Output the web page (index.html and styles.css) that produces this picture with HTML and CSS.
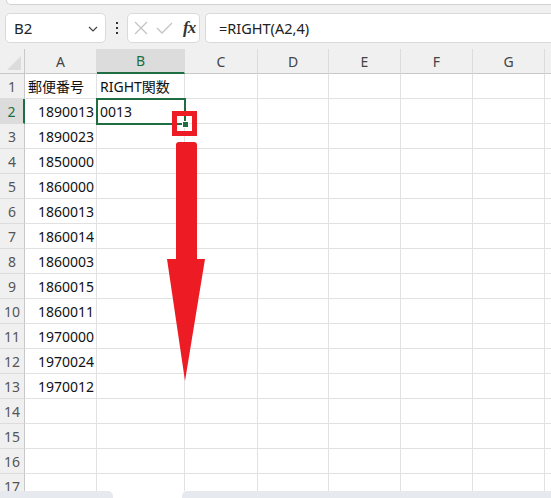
FILE: index.html
```html
<!DOCTYPE html>
<html>
<head>
<meta charset="utf-8">
<link rel="stylesheet" href="styles.css">
</head>
<body>
<div class="app">
  <div class="ribbon-edge"></div>
  <div class="formula-bar">
    <div class="namebox">
      <span class="name">B2</span>
      <svg class="chev" width="10" height="6" viewBox="0 0 10 6"><path d="M1 1 L5 5 L9 1" fill="none" stroke="#444" stroke-width="1.2"/></svg>
    </div>
    <div class="vdots"><span></span><span></span><span></span></div>
    <div class="fbtns">
      <svg width="14" height="14" viewBox="0 0 14 14"><path d="M1 1 L13 13 M13 1 L1 13" stroke="#c4c4c4" stroke-width="1.3" fill="none"/></svg>
      <svg width="17" height="14" viewBox="0 0 17 14"><path d="M1 7 L6 12 L16 2" stroke="#c4c4c4" stroke-width="1.3" fill="none"/></svg>
      <span class="fx">fx</span>
    </div>
    <div class="finput">=RIGHT(A2,4)</div>
  </div>
  <div class="sheet">
    <div class="grid">
      <div class="corner"><svg width="14" height="14" viewBox="0 0 14 14"><path d="M14 0 L14 14 L0 14 Z" fill="#dcdcdc"/></svg></div>
      <div class="ch">A</div><div class="ch sel">B</div><div class="ch">C</div><div class="ch">D</div><div class="ch">E</div><div class="ch">F</div><div class="ch">G</div><div class="ch"></div>

      <div class="rh">1</div><div class="c">郵便番号</div><div class="c l">RIGHT関数</div><div class="c"></div><div class="c"></div><div class="c"></div><div class="c"></div><div class="c"></div><div class="c"></div>
      <div class="rh sel">2</div><div class="c n">1890013</div><div class="c l">0013</div><div class="c"></div><div class="c"></div><div class="c"></div><div class="c"></div><div class="c"></div><div class="c"></div>
      <div class="rh">3</div><div class="c n">1890023</div><div class="c"></div><div class="c"></div><div class="c"></div><div class="c"></div><div class="c"></div><div class="c"></div><div class="c"></div>
      <div class="rh">4</div><div class="c n">1850000</div><div class="c"></div><div class="c"></div><div class="c"></div><div class="c"></div><div class="c"></div><div class="c"></div><div class="c"></div>
      <div class="rh">5</div><div class="c n">1860000</div><div class="c"></div><div class="c"></div><div class="c"></div><div class="c"></div><div class="c"></div><div class="c"></div><div class="c"></div>
      <div class="rh">6</div><div class="c n">1860013</div><div class="c"></div><div class="c"></div><div class="c"></div><div class="c"></div><div class="c"></div><div class="c"></div><div class="c"></div>
      <div class="rh">7</div><div class="c n">1860014</div><div class="c"></div><div class="c"></div><div class="c"></div><div class="c"></div><div class="c"></div><div class="c"></div><div class="c"></div>
      <div class="rh">8</div><div class="c n">1860003</div><div class="c"></div><div class="c"></div><div class="c"></div><div class="c"></div><div class="c"></div><div class="c"></div><div class="c"></div>
      <div class="rh">9</div><div class="c n">1860015</div><div class="c"></div><div class="c"></div><div class="c"></div><div class="c"></div><div class="c"></div><div class="c"></div><div class="c"></div>
      <div class="rh">10</div><div class="c n">1860011</div><div class="c"></div><div class="c"></div><div class="c"></div><div class="c"></div><div class="c"></div><div class="c"></div><div class="c"></div>
      <div class="rh">11</div><div class="c n">1970000</div><div class="c"></div><div class="c"></div><div class="c"></div><div class="c"></div><div class="c"></div><div class="c"></div><div class="c"></div>
      <div class="rh">12</div><div class="c n">1970024</div><div class="c"></div><div class="c"></div><div class="c"></div><div class="c"></div><div class="c"></div><div class="c"></div><div class="c"></div>
      <div class="rh">13</div><div class="c n">1970012</div><div class="c"></div><div class="c"></div><div class="c"></div><div class="c"></div><div class="c"></div><div class="c"></div><div class="c"></div>
      <div class="rh">14</div><div class="c"></div><div class="c"></div><div class="c"></div><div class="c"></div><div class="c"></div><div class="c"></div><div class="c"></div><div class="c"></div>
      <div class="rh">15</div><div class="c"></div><div class="c"></div><div class="c"></div><div class="c"></div><div class="c"></div><div class="c"></div><div class="c"></div><div class="c"></div>
      <div class="rh">16</div><div class="c"></div><div class="c"></div><div class="c"></div><div class="c"></div><div class="c"></div><div class="c"></div><div class="c"></div><div class="c"></div>
      <div class="rh">17</div><div class="c"></div><div class="c"></div><div class="c"></div><div class="c"></div><div class="c"></div><div class="c"></div><div class="c"></div><div class="c"></div>
    </div>
    <div class="selection"><span class="handle"></span></div>
    <div class="redbox"></div>
    <svg class="arrow" width="60" height="250" viewBox="0 0 60 250">
      <path d="M10 4 Q10 1 13 1 L28 1 Q31 1 31 4 L31 118 L39 118 L19 240 L1 118 L10 118 Z" fill="#ed1c24"/>
    </svg>
  </div>
  <div class="bottombar">
    <div class="bb-left"></div>
    <div class="bb-right"></div>
  </div>
</div>
</body>
</html>
```

FILE: styles.css
```css
html, body {
  margin: 0;
  padding: 0;
}
body {
  width: 551px;
  height: 498px;
  overflow: hidden;
  background: #f0f0f0;
  font-family: "Noto Sans", "Noto Sans CJK JP", sans-serif;
  color: #222;
}
.app {
  position: relative;
  width: 551px;
  height: 498px;
  overflow: hidden;
}
.ribbon-edge {
  height: 4px;
  margin: 0 0 0 6px;
  background: #fff;
  border-bottom: 1px solid #d2d2d2;
  border-left: 1px solid #d2d2d2;
  border-bottom-left-radius: 5px;
}
.formula-bar {
  display: flex;
  align-items: center;
  height: 30px;
  margin-top: 8px;
  padding-left: 5px;
}
.namebox {
  box-sizing: border-box;
  width: 101px;
  height: 30px;
  background: #fff;
  border: 1px solid #dadada;
  border-radius: 5px;
  display: flex;
  align-items: center;
  justify-content: space-between;
  padding: 0 7px 0 8px;
}
.name {
  font-size: 15px;
  color: #222;
}
.chev {
  margin-top: 1px;
}
.vdots {
  width: 21px;
  display: flex;
  flex-direction: column;
  align-items: center;
  gap: 3px;
}
.vdots span {
  width: 2px;
  height: 2px;
  background: #333;
}
.fbtns {
  box-sizing: border-box;
  width: 73px;
  height: 30px;
  background: #fff;
  border: 1px solid #dadada;
  border-radius: 5px;
  display: flex;
  align-items: center;
  padding: 0 0 0 6px;
  gap: 8px;
}
.fx {
  font-family: "Liberation Serif", "DejaVu Serif", serif;
  font-style: italic;
  font-weight: bold;
  font-size: 17px;
  color: #333;
  margin-left: 2px;
  letter-spacing: -1px;
}
.finput {
  box-sizing: border-box;
  flex: 1;
  margin-left: 5px;
  height: 30px;
  background: #fff;
  border: 1px solid #dadada;
  border-right: none;
  border-radius: 5px 0 0 5px;
  display: flex;
  align-items: center;
  padding-left: 13px;
  font-size: 14.5px;
  color: #222;
}
.sheet {
  position: relative;
  margin-top: 6px;
  height: 442px;
  background: #fff;
}
.grid {
  display: grid;
  grid-template-columns: 25px 72px 88px 73px 71px 72px 72px 72px 20px;
  grid-auto-rows: 25px;
}
.corner {
  background: #f0f0f0;
  border-right: 1px solid #c8c8c8;
  border-bottom: 1px solid #c8c8c8;
  box-sizing: border-box;
  display: flex;
  align-items: flex-end;
  justify-content: flex-end;
  padding: 0 3px 3px 0;
}
.ch {
  box-sizing: border-box;
  background: #f0f0f0;
  border-right: 1px solid #dcdcdc;
  border-bottom: 1px solid #c8c8c8;
  display: flex;
  align-items: center;
  justify-content: center;
  font-size: 14px;
  color: #444;
}
.ch.sel {
  background: #dcdcdc;
  border-bottom: 2px solid #1e6e42;
  color: #1e6e42;
}
.rh {
  box-sizing: border-box;
  background: #f0f0f0;
  border-right: 1px solid #c8c8c8;
  border-bottom: 1px solid #dcdcdc;
  display: flex;
  align-items: center;
  justify-content: center;
  font-size: 14px;
  color: #555;
}
.rh.sel {
  background: #dcdcdc;
  border-right: 2px solid #1e6e42;
  color: #1e6e42;
}
.c {
  box-sizing: border-box;
  border-right: 1px solid #e1e1e1;
  border-bottom: 1px solid #e1e1e1;
  display: flex;
  align-items: center;
  padding: 0 2px 0 3px;
  font-size: 14px;
  color: #111;
  white-space: nowrap;
  overflow: visible;
}
.c.n {
  justify-content: flex-end;
}
.selection {
  position: absolute;
  left: 96px;
  top: 49px;
  width: 90px;
  height: 27px;
  box-sizing: border-box;
  border: 2px solid #1e6e42;
}
.handle {
  position: absolute;
  right: -5px;
  bottom: -5px;
  width: 5px;
  height: 5px;
  background: #1e6e42;
  border: 1px solid #fff;
}
.redbox {
  position: absolute;
  left: 172px;
  top: 62px;
  width: 25px;
  height: 25px;
  box-sizing: border-box;
  border: 5px solid #ed1c24;
}
.arrow {
  position: absolute;
  left: 166px;
  top: 92px;
}
.bottombar {
  position: absolute;
  left: 0;
  right: 0;
  bottom: 0;
  height: 7px;
  background: #fff;
  display: flex;
  justify-content: space-between;
}
.bb-left {
  width: 113px;
  background: #e6e9ee;
  border-radius: 0 5px 0 0;
}
.bb-right {
  width: 369px;
  background: #e6e9ee;
  border-radius: 5px 0 0 0;
}
```
